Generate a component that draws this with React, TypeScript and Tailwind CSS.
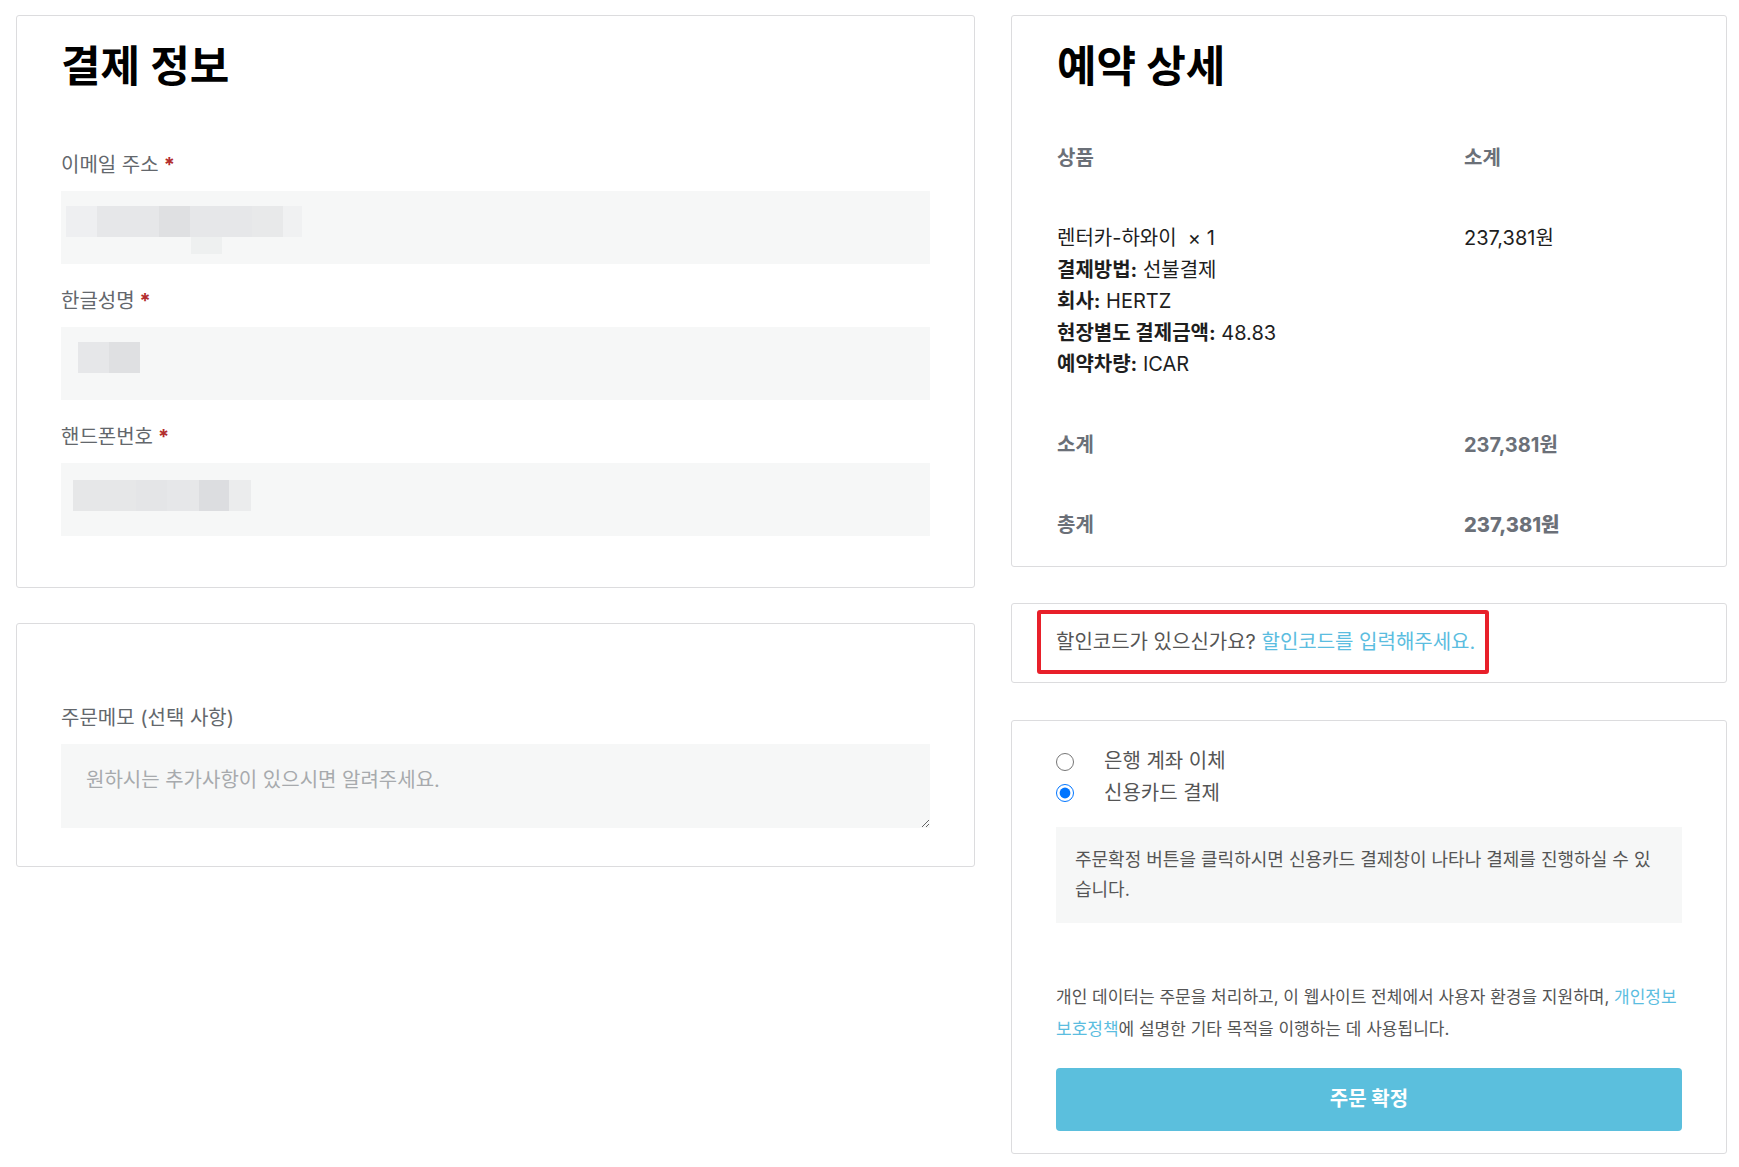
import React from 'react';

const Mosaic: React.FC<{ cells: { w: number; c: string }[]; className?: string }> = ({ cells, className }) => (
  <div className={`flex h-[31px] ${className ?? ''}`}>
    {cells.map((cell, idx) => (
      <div key={idx} className="h-full" style={{ width: cell.w, backgroundColor: cell.c }} />
    ))}
  </div>
);

const Required = () => <span className="ml-[5px] font-bold text-[#b32d2e]">*</span>;

const App: React.FC = () => {
  return (
    <div className="min-h-screen bg-white font-[Inter,'Noto_Sans_CJK_KR',sans-serif] text-[#1e1e1e]">
      <div className="flex items-start gap-[36px] pl-[16px] pt-[15px]">
        {/* Left column */}
        <div className="flex w-[959px] flex-col gap-[35px]">
          {/* Billing info */}
          <section className="rounded-[3px] border border-[#dcdcde] px-[44px] pt-[25px] pb-[51px]">
            <h2 className="mb-[61px] text-[43px] leading-[50px] font-bold text-black">결제 정보</h2>
            <div className="flex flex-col gap-[24px]">
              <div>
                <label className="mb-[12px] block text-[20px] leading-[27px] text-[#63676c]">
                  이메일 주소<Required />
                </label>
                <div className="h-[73px] bg-[#f6f7f7] pt-[15px] pl-[5px]">
                  <Mosaic
                    cells={[
                      { w: 31, c: '#eeeff1' },
                      { w: 62, c: '#e6e7e9' },
                      { w: 31, c: '#dfe0e2' },
                      { w: 62, c: '#e6e7e9' },
                      { w: 31, c: '#e8e9ea' },
                      { w: 19, c: '#f0f1f2' },
                    ]}
                  />
                  <div className="ml-[125px] h-[17px] w-[31px] bg-[#eef0f0]" />
                </div>
              </div>
              <div>
                <label className="mb-[12px] block text-[20px] leading-[27px] text-[#63676c]">
                  한글성명<Required />
                </label>
                <div className="h-[73px] bg-[#f6f7f7] pt-[15px] pl-[17px]">
                  <Mosaic
                    cells={[
                      { w: 31, c: '#e6e7e9' },
                      { w: 31, c: '#dfe0e2' },
                    ]}
                  />
                </div>
              </div>
              <div>
                <label className="mb-[12px] block text-[20px] leading-[27px] text-[#63676c]">
                  핸드폰번호<Required />
                </label>
                <div className="h-[73px] bg-[#f6f7f7] pt-[17px] pl-[12px]">
                  <Mosaic
                    cells={[
                      { w: 63, c: '#e6e7e8' },
                      { w: 31, c: '#e4e5e7' },
                      { w: 32, c: '#e6e7e9' },
                      { w: 30, c: '#dcdde0' },
                      { w: 22, c: '#ebeced' },
                    ]}
                  />
                </div>
              </div>
            </div>
          </section>

          {/* Order note */}
          <section className="rounded-[3px] border border-[#dcdcde] px-[44px] pt-[81px] pb-[38px]">
            <label className="mb-[12px] block text-[20px] leading-[27px] text-[#63676c]">주문메모 (선택 사항)</label>
            <textarea
              className="block h-[84px] w-full bg-[#f6f7f7] px-[25px] pt-[23px] text-[20px] leading-[27px] text-[#333] outline-none placeholder:text-[#a7aaad]"
              placeholder="원하시는 추가사항이 있으시면 알려주세요."
            />
          </section>
        </div>

        {/* Right column */}
        <div className="flex w-[716px] flex-col">
          {/* Order review */}
          <section className="rounded-[3px] border border-[#dcdcde] px-[45px] pt-[25px]">
            <h2 className="mb-[27px] text-[43px] leading-[50px] font-bold text-black">예약 상세</h2>
            <div className="grid grid-cols-[407px_1fr] text-[20px] leading-[31.5px]">
              <div className="py-[24.5px] font-bold text-[#6b7078]">상품</div>
              <div className="py-[24.5px] font-bold text-[#6b7078]">소계</div>

              <div className="py-[24.5px]">
                <div>렌터카-하와이&nbsp; ×&nbsp;1</div>
                <div><strong>결제방법:</strong> 선불결제</div>
                <div><strong>회사:</strong> HERTZ</div>
                <div><strong>현장별도 결제금액:</strong> 48.83</div>
                <div><strong>예약차량:</strong> ICAR</div>
              </div>
              <div className="py-[24.5px]">237,381원</div>

              <div className="py-[24.5px] font-bold text-[#6b7078]">소계</div>
              <div className="py-[24.5px] font-bold text-[#6b7078]">237,381원</div>

              <div className="py-[24.5px] font-bold text-[#6b7078]">총계</div>
              <div className="py-[24.5px] font-extrabold text-[#6b7078]">237,381원</div>
            </div>
          </section>

          {/* Coupon */}
          <section className="mt-[36px] rounded-[3px] border border-[#dcdcde] pt-[6px] pb-[8px] pl-[25px]">
            <div className="w-[452px] rounded-[3px] border-[4px] border-[#e8202a] py-[14.5px] pl-[15px] text-[20px] leading-[27px] whitespace-nowrap text-[#555]">
              할인코드가 있으신가요? <a className="text-[#5bbde0]">할인코드를 입력해주세요.</a>
            </div>
          </section>

          {/* Payment */}
          <section className="mt-[37px] rounded-[3px] border border-[#dcdcde] px-[44px] pt-[25px] pb-[22px]">
            <div className="flex flex-col text-[20px] leading-[31.5px] text-[#555]">
              <label className="flex h-[31.5px] items-center gap-[30px]">
                <input type="radio" name="pay" className="m-0 h-[18px] w-[18px]" />
                <span>은행 계좌 이체</span>
              </label>
              <label className="flex h-[31.5px] items-center gap-[30px]">
                <input type="radio" name="pay" defaultChecked className="m-0 h-[18px] w-[18px]" />
                <span>신용카드 결제</span>
              </label>
            </div>
            <div className="mt-[17.5px] bg-[#f6f7f7] px-[19px] py-[18px] text-[18px] leading-[30px] text-[#555]">
              주문확정 버튼을 클릭하시면 신용카드 결제창이 나타나 결제를 진행하실 수 있<br />습니다.
            </div>
            <p className="mt-[58px] text-[17px] leading-[32px] text-[#555]">
              개인 데이터는 주문을 처리하고, 이 웹사이트 전체에서 사용자 환경을 지원하며, <a className="text-[#5bbde0]">개인정보 보호정책</a>에 설명한 기타 목적을 이행하는 데 사용됩니다.
            </p>
            <button className="mt-[23px] h-[63px] w-full rounded-[4px] bg-[#5bbfdd] text-[20px] font-bold text-white">
              주문 확정
            </button>
          </section>
        </div>
      </div>
    </div>
  );
};

export default App;
